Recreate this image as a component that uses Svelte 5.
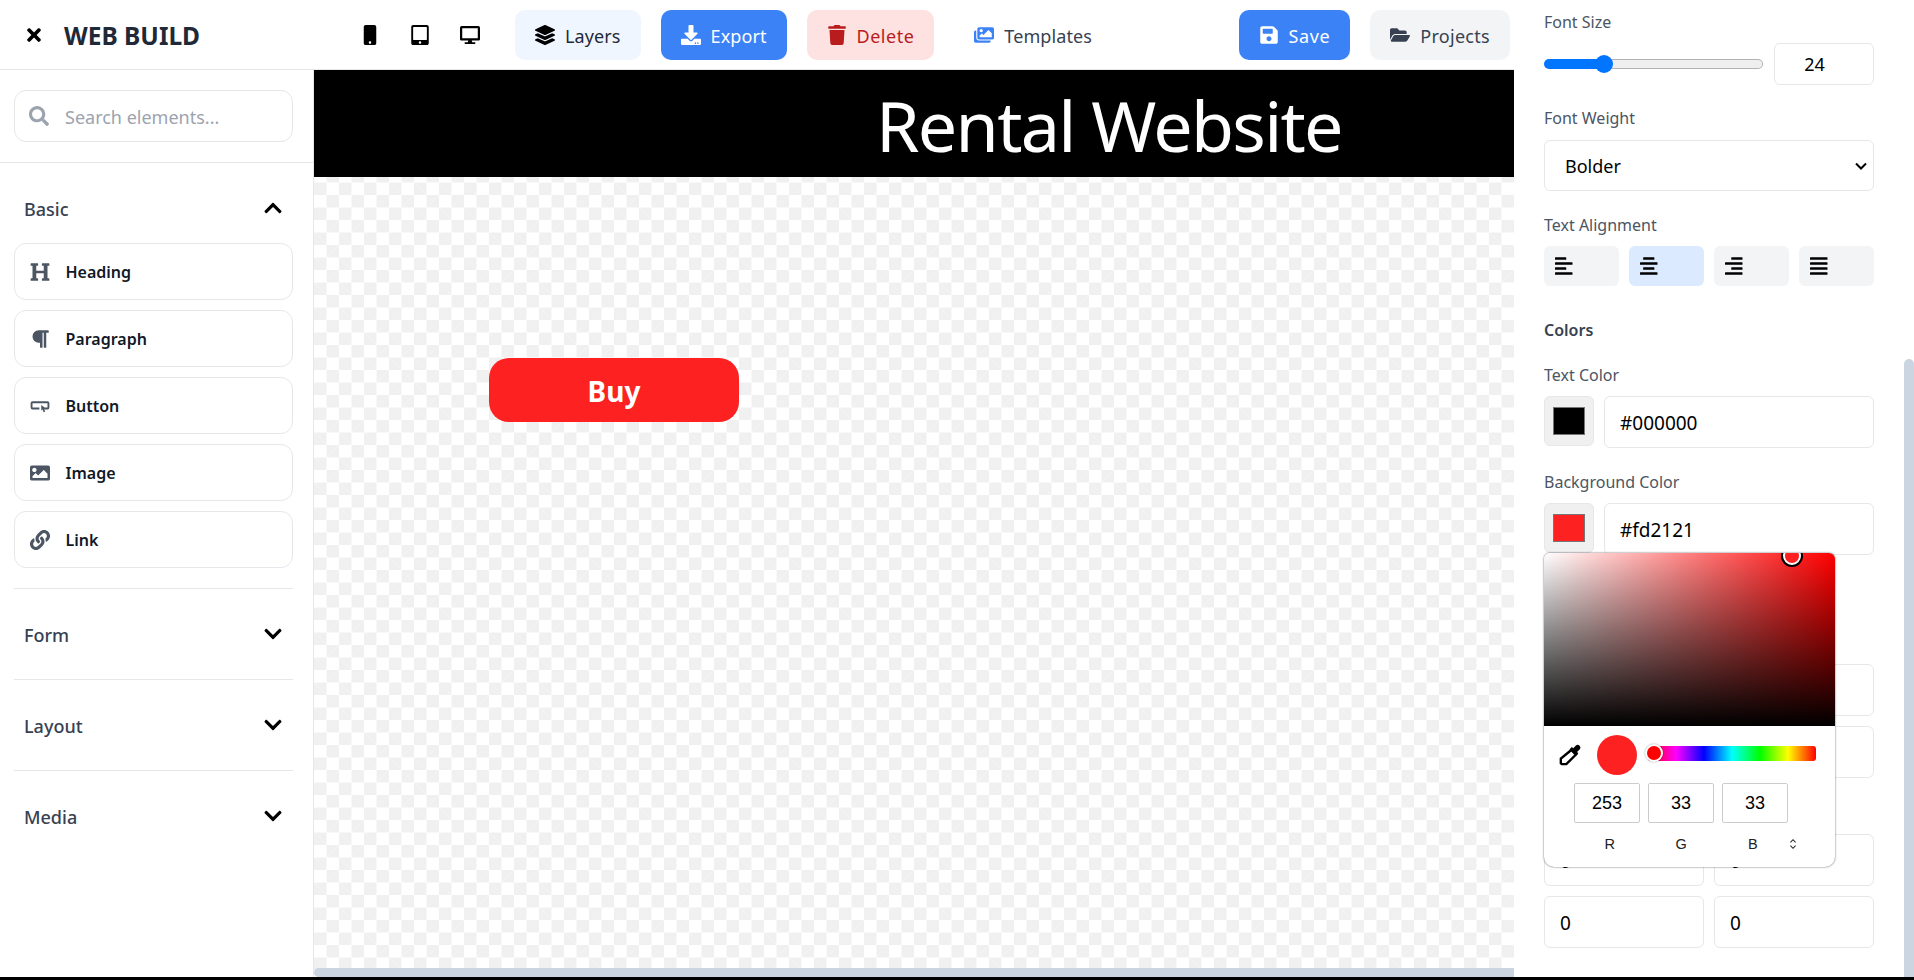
<script>
  const icons = {
    times: [352, 'M242.72 256l100.07-100.07c12.28-12.28 12.28-32.19 0-44.48l-22.24-22.24c-12.28-12.28-32.19-12.28-44.48 0L176 189.28 75.93 89.21c-12.28-12.28-32.19-12.28-44.48 0L9.21 111.45c-12.28 12.28-12.28 32.19 0 44.48L109.28 256 9.21 356.07c-12.28 12.28-12.28 32.19 0 44.48l22.24 22.24c12.28 12.28 32.2 12.28 44.48 0L176 322.72l100.07 100.07c12.28 12.28 32.2 12.28 44.48 0l22.24-22.24c12.28-12.28 12.28-32.19 0-44.48L242.72 256z'],
    mobile: [320, 'M272 0H48C21.5 0 0 21.5 0 48v416c0 26.5 21.5 48 48 48h224c26.5 0 48-21.5 48-48V48c0-26.5-21.5-48-48-48zM160 480c-17.7 0-32-14.3-32-32s14.3-32 32-32 32 14.3 32 32-14.3 32-32 32z'],
    tablet: [448, 'M400 0H48C21.5 0 0 21.5 0 48v416c0 26.5 21.5 48 48 48h352c26.5 0 48-21.5 48-48V48c0-26.5-21.5-48-48-48zM224 480c-17.7 0-32-14.3-32-32s14.3-32 32-32 32 14.3 32 32-14.3 32-32 32zm176-108c0 6.6-5.4 12-12 12H60c-6.6 0-12-5.4-12-12V60c0-6.6 5.4-12 12-12h328c6.6 0 12 5.4 12 12v312z'],
    desktop: [576, 'M528 0H48C21.5 0 0 21.5 0 48v320c0 26.5 21.5 48 48 48h192l-16 48h-72c-13.3 0-24 10.7-24 24s10.7 24 24 24h272c13.3 0 24-10.7 24-24s-10.7-24-24-24h-72l-16-48h192c26.5 0 48-21.5 48-48V48c0-26.5-21.5-48-48-48zm-16 352H64V64h448v288z'],
    layers: [512, 'M12.41 148.02l232.94 105.67c6.8 3.09 14.49 3.09 21.29 0l232.94-105.67c16.55-7.51 16.55-32.52 0-40.03L266.65 2.31a25.607 25.607 0 0 0-21.29 0L12.41 107.98c-16.55 7.51-16.55 32.53 0 40.04zm487.18 88.28l-58.09-26.33-161.64 73.27c-7.56 3.43-15.59 5.17-23.86 5.17s-16.29-1.74-23.86-5.17L70.51 209.97l-58.1 26.33c-16.55 7.5-16.55 32.5 0 40l232.94 105.59c6.8 3.08 14.49 3.08 21.29 0L499.59 276.3c16.55-7.5 16.55-32.5 0-40zm0 127.8l-57.87-26.23-161.86 73.37c-7.56 3.43-15.59 5.17-23.86 5.17s-16.29-1.74-23.86-5.17L70.29 337.87 12.41 364.1c-16.55 7.5-16.55 32.5 0 40l232.94 105.59c6.8 3.08 14.49 3.08 21.29 0L499.59 404.1c16.55-7.5 16.55-32.5 0-40z'],
    download: [512, 'M216 0h80c13.3 0 24 10.7 24 24v168h87.7c17.8 0 26.7 21.5 14.1 34.1L269.7 378.3c-7.5 7.5-19.8 7.5-27.3 0L90.1 226.1c-12.6-12.6-3.7-34.1 14.1-34.1H192V24c0-13.3 10.7-24 24-24zm296 376v112c0 13.3-10.7 24-24 24H24c-13.3 0-24-10.7-24-24V376c0-13.3 10.7-24 24-24h146.7l49 49c20.1 20.1 52.5 20.1 72.6 0l49-49H488c13.3 0 24 10.7 24 24zm-124 88c0-11-9-20-20-20s-20 9-20 20 9 20 20 20 20-9 20-20zm64 0c0-11-9-20-20-20s-20 9-20 20 9 20 20 20 20-9 20-20z'],
    trash: [448, 'M432 32H312l-9.4-18.7A24 24 0 0 0 281.1 0H166.8a23.72 23.72 0 0 0-21.4 13.3L136 32H16A16 16 0 0 0 0 48v32a16 16 0 0 0 16 16h416a16 16 0 0 0 16-16V48a16 16 0 0 0-16-16zM53.2 467a48 48 0 0 0 47.9 45h245.8a48 48 0 0 0 47.9-45L416 128H32z'],
    images: [576, 'M480 416v16c0 26.51-21.49 48-48 48H48c-26.51 0-48-21.49-48-48V176c0-26.51 21.49-48 48-48h16v208c0 44.112 35.888 80 80 80h336zm96-80V80c0-26.51-21.49-48-48-48H144c-26.51 0-48 21.49-48 48v256c0 26.51 21.49 48 48 48h384c26.51 0 48-21.49 48-48zM256 128c0 26.51-21.49 48-48 48s-48-21.49-48-48 21.49-48 48-48 48 21.49 48 48zm-96 144l55.515-55.515c4.686-4.686 12.284-4.686 16.971 0L272 256l135.515-135.515c4.686-4.686 12.284-4.686 16.971 0L512 208v112H160v-48z'],
    save: [448, 'M433.941 129.941l-83.882-83.882A48 48 0 0 0 316.118 32H48C21.49 32 0 53.49 0 80v352c0 26.51 21.49 48 48 48h352c26.51 0 48-21.49 48-48V163.882a48 48 0 0 0-14.059-33.941zM224 416c-35.346 0-64-28.654-64-64 0-35.346 28.654-64 64-64s64 28.654 64 64c0 35.346-28.654 64-64 64zm96-304.52V212c0 6.627-5.373 12-12 12H76c-6.627 0-12-5.373-12-12V108c0-6.627 5.373-12 12-12h228.52c3.183 0 6.235 1.264 8.485 3.515l3.48 3.48A11.996 11.996 0 0 1 320 111.48z'],
    folder: [576, 'M572.694 292.093L500.27 416.248A63.997 63.997 0 0 1 444.989 448H45.025c-18.523 0-30.064-20.093-20.731-36.093l72.424-124.155A64 64 0 0 1 152 256h399.964c18.523 0 30.064 20.093 20.73 36.093zM152 224h328v-48c0-26.51-21.49-48-48-48H272l-64-64H48C21.49 64 0 85.49 0 112v278.046l69.077-118.418C86.214 242.25 117.989 224 152 224z'],
    search: [512, 'M505 442.7L405.3 343c-4.5-4.5-10.6-7-17-7H372c27.6-35.3 44-79.7 44-128C416 93.1 322.9 0 208 0S0 93.1 0 208s93.1 208 208 208c48.3 0 92.7-16.4 128-44v16.3c0 6.4 2.5 12.5 7 17l99.7 99.7c9.4 9.4 24.6 9.4 33.9 0l28.3-28.3c9.4-9.4 9.4-24.6.1-34zM208 336c-70.7 0-128-57.2-128-128 0-70.7 57.2-128 128-128 70.7 0 128 57.2 128 128 0 70.7-57.2 128-128 128z'],
    heading: [512, 'M448 96v320h32a16 16 0 0 1 16 16v32a16 16 0 0 1-16 16H320a16 16 0 0 1-16-16v-32a16 16 0 0 1 16-16h32V288H160v128h32a16 16 0 0 1 16 16v32a16 16 0 0 1-16 16H32a16 16 0 0 1-16-16v-32a16 16 0 0 1 16-16h32V96H32a16 16 0 0 1-16-16V48a16 16 0 0 1 16-16h160a16 16 0 0 1 16 16v32a16 16 0 0 1-16 16h-32v128h192V96h-32a16 16 0 0 1-16-16V48a16 16 0 0 1 16-16h160a16 16 0 0 1 16 16v32a16 16 0 0 1-16 16z'],
    paragraph: [448, 'M448 48v32a16 16 0 0 1-16 16h-48v368a16 16 0 0 1-16 16h-32a16 16 0 0 1-16-16V96h-32v368a16 16 0 0 1-16 16h-32a16 16 0 0 1-16-16V352h-32a160 160 0 0 1 0-320h240a16 16 0 0 1 16 16z'],
    button: [512, 'M64 136h384a48 48 0 0 1 48 48v112a48 48 0 0 1-48 48h-84v-48h84V184H64v112h176v48H64a48 48 0 0 1-48-48V184a48 48 0 0 1 48-48zM288 232l128 92h-60l34 72-40 18-34-74-28 38z'],
    image: [512, 'M464 448H48c-26.51 0-48-21.49-48-48V112c0-26.51 21.49-48 48-48h416c26.51 0 48 21.49 48 48v288c0 26.51-21.49 48-48 48zM112 120c-30.928 0-56 25.072-56 56s25.072 56 56 56 56-25.072 56-56-25.072-56-56-56zM64 384h384V272l-87.515-87.515c-4.686-4.686-12.284-4.686-16.971 0L208 320l-55.515-55.515c-4.686-4.686-12.284-4.686-16.971 0L64 336v48z'],
    link: [512, 'M326.612 185.391c59.747 59.809 58.927 155.698.36 214.59-.11.12-.24.25-.36.37l-67.2 67.2c-59.27 59.27-155.699 59.262-214.96 0-59.27-59.26-59.27-155.7 0-214.96l37.106-37.106c9.84-9.84 26.786-3.3 27.294 10.606.648 17.722 3.826 35.527 9.69 52.721 1.986 5.822.567 12.262-3.783 16.612l-13.087 13.087c-28.026 28.026-28.905 73.66-1.155 101.96 28.024 28.579 74.086 28.749 102.325.51l67.2-67.19c28.191-28.191 28.073-73.757 0-101.83-3.701-3.694-7.429-6.564-10.341-8.569a16.037 16.037 0 0 1-6.947-12.606c-.396-10.567 3.348-21.456 11.698-29.806l21.054-21.055c5.521-5.521 14.182-6.199 20.584-1.731a152.482 152.482 0 0 1 20.522 17.197zM467.547 44.449c-59.261-59.262-155.69-59.27-214.96 0l-67.2 67.2c-.12.12-.25.25-.36.37-58.566 58.892-59.387 154.781.36 214.59a152.454 152.454 0 0 0 20.521 17.196c6.402 4.468 15.064 3.789 20.584-1.731l21.054-21.055c8.35-8.35 12.094-19.239 11.698-29.806a16.037 16.037 0 0 0-6.947-12.606c-2.912-2.005-6.64-4.875-10.341-8.569-28.073-28.073-28.191-73.639 0-101.83l67.2-67.19c28.239-28.239 74.3-28.069 102.325.51 27.75 28.3 26.872 73.934-1.155 101.96l-13.087 13.087c-4.35 4.35-5.769 10.79-3.783 16.612 5.864 17.194 9.042 34.999 9.69 52.721.509 13.906 17.454 20.446 27.294 10.606l37.106-37.106c59.271-59.259 59.271-155.699.001-214.959z'],
    down: [448, 'M207.029 381.476L12.686 187.132c-9.373-9.373-9.373-24.569 0-33.941l22.667-22.667c9.357-9.357 24.522-9.375 33.901-.04L224 284.505l154.745-154.021c9.379-9.335 24.544-9.317 33.901.04l22.667 22.667c9.373 9.373 9.373 24.569 0 33.941L240.971 381.476c-9.373 9.372-24.569 9.372-33.942 0z'],
    up: [448, 'M240.971 130.524l194.343 194.343c9.373 9.373 9.373 24.569 0 33.941l-22.667 22.667c-9.357 9.357-24.522 9.375-33.901.04L224 227.495 69.255 381.516c-9.379 9.335-24.544 9.317-33.901-.04l-22.667-22.667c-9.373-9.373-9.373-24.569 0-33.941L207.03 130.525c9.372-9.373 24.568-9.373 33.941-.001z']
  };

  const devices = ['mobile', 'tablet', 'desktop'];
  const elements = [
    { name: 'Heading', icon: 'heading' },
    { name: 'Paragraph', icon: 'paragraph' },
    { name: 'Button', icon: 'button' },
    { name: 'Image', icon: 'image' },
    { name: 'Link', icon: 'link' }
  ];
  const closedSections = ['Form', 'Layout', 'Media'];

  // bar offsets per alignment, in the 448 wide icon box
  const aligns = [
    { name: 'left', short: 0 },
    { name: 'center', short: 80, active: true },
    { name: 'right', short: 160 },
    { name: 'justify', short: 0, full: true }
  ];
  const rgb = [253, 33, 33];
</script>

{#snippet icon(name, size = 20)}
  <svg class="ico" viewBox="0 0 {icons[name][0]} 512" width={size} height={size}>
    <path fill="currentColor" d={icons[name][1]} />
  </svg>
{/snippet}

<div class="page">
  <div class="main">
    <header class="topbar">
      <div class="brand">
        <button class="plain close">{@render icon('times')}</button>
        <h1>WEB BUILD</h1>
      </div>
      <div class="devices">
        {#each devices as d}
          <button class="plain device">{@render icon(d)}</button>
        {/each}
      </div>
      <div class="actions">
        <button class="btn layers">{@render icon('layers')}<span>Layers</span></button>
        <button class="btn blue">{@render icon('download')}<span>Export</span></button>
        <button class="btn danger">{@render icon('trash')}<span>Delete</span></button>
        <button class="btn templates">{@render icon('images')}<span>Templates</span></button>
      </div>
      <div class="actions right">
        <button class="btn blue save">{@render icon('save')}<span>Save</span></button>
        <button class="btn projects">{@render icon('folder')}<span>Projects</span></button>
      </div>
    </header>

    <div class="workspace">
      <aside class="sidebar">
        <div class="searchwrap">
          <div class="search">
            {@render icon('search')}
            <input type="text" placeholder="Search elements..." />
          </div>
        </div>
        <div class="sections">
          <section class="open">
            <div class="sec-head"><span>Basic</span>{@render icon('up')}</div>
            <div class="cards">
              {#each elements as el}
                <div class="card">
                  <span class="card-icon">{@render icon(el.icon)}</span>
                  {el.name}
                </div>
              {/each}
            </div>
          </section>
          {#each closedSections as s}
            <section>
              <div class="sec-head"><span>{s}</span>{@render icon('down')}</div>
            </section>
          {/each}
        </div>
      </aside>

      <div class="canvas">
        <div class="hero">Rental Website</div>
        <button class="buy">Buy</button>
        <div class="hscroll"></div>
      </div>
    </div>
  </div>

  <aside class="props">
    <label class="lbl" for="fs">Font Size</label>
    <div class="size-row">
      <input id="fs" type="range" min="10" max="66" value="24" />
      <input class="field num" type="text" value="24" />
    </div>

    <label class="lbl" for="fw">Font Weight</label>
    <select id="fw" class="field weight">
      <option>Bolder</option>
    </select>

    <div class="lbl">Text Alignment</div>
    <div class="align-row">
      {#each aligns as a}
        <button class="align" class:active={a.active}>
          <svg viewBox="0 0 448 512" width="17.5" height="20">
            <rect x={a.short} y="32" width={a.full ? 448 : 288} height="64" rx="14" />
            <rect x="0" y="160" width="448" height="64" rx="14" />
            <rect x={a.short} y="288" width={a.full ? 448 : 288} height="64" rx="14" />
            <rect x="0" y="416" width="448" height="64" rx="14" />
          </svg>
        </button>
      {/each}
    </div>

    <h3>Colors</h3>

    <div class="lbl">Text Color</div>
    <div class="color-row">
      <input class="swatch" type="color" value="#000000" />
      <input class="field hex" type="text" value="#000000" />
    </div>

    <div class="lbl">Background Color</div>
    <div class="color-row popup-anchor">
      <input class="swatch" type="color" value="#fd2121" />
      <input class="field hex" type="text" value="#fd2121" />

      <div class="picker">
        <div class="sat">
          <span class="sat-dot"></span>
        </div>
        <div class="picker-top">
          <svg class="dropper" viewBox="0 0 24 24" width="22" height="22">
            <path d="M13.5 6.500l5 5L8 22H3l-1-1v-5z" fill="#fff" stroke="#000" stroke-width="2.6" stroke-linejoin="miter" />
            <path d="M11.500 5.800l2.600-2.600 1.400 1.400 3-3a3 3 0 0 1 4.200 4.200l-3 3 1.400 1.400-2.600 2.600z" fill="#000" />
          </svg>
          <span class="preview"></span>
          <div class="hue"><span class="hue-thumb"></span></div>
        </div>
        <div class="rgb-row">
          {#each rgb as v}
            <input class="rgb" type="text" value={v} />
          {/each}
        </div>
        <div class="rgb-labels">
          <span>R</span><span>G</span><span>B</span>
          <svg class="toggle" viewBox="0 0 8 14" width="8" height="12">
            <path d="M1 5l3-3 3 3M1 9l3 3 3-3" fill="none" stroke="#222" stroke-width="1.2" />
          </svg>
        </div>
      </div>
    </div>

    <div class="lbl-gap first"></div>
    <input class="field hex" type="text" value="" />
    <input class="field hex stacked" type="text" value="" />
    <div class="lbl-gap second"></div>
    <div class="pair-grid">
      <input class="field hex" type="text" value="0" />
      <input class="field hex" type="text" value="0" />
      <input class="field hex" type="text" value="0" />
      <input class="field hex" type="text" value="0" />
    </div>

    <div class="vscroll"></div>
  </aside>
</div>

<style>
  :global(body) {
    margin: 0;
    overflow: hidden;
    background: #fff;
    font-family: "Noto Sans", "Open Sans", sans-serif;
  }

  .page {
    display: flex;
    width: 1914px;
    height: 977px;
    border-bottom: 3px solid #000;
    overflow: hidden;
  }

  button {
    font-family: inherit;
    border: 0;
    cursor: pointer;
  }

  .ico {
    display: block;
    flex: none;
  }

  .main {
    width: 1514px;
    display: flex;
    flex-direction: column;
    flex: none;
  }

  .topbar {
    height: 69px;
    flex: none;
    display: flex;
    align-items: center;
    border-bottom: 1px solid #e5e7eb;
    background: #fff;
  }

  .brand {
    width: 345px;
    padding-left: 24px;
    box-sizing: border-box;
    display: flex;
    align-items: center;
    gap: 20px;
    flex: none;
  }

  .brand h1 {
    margin: 0;
    padding-top: 2px;
    font-size: 24.5px;
    font-weight: 700;
    color: #1f2937;
  }

  .plain {
    background: none;
    padding: 0;
    color: #000;
  }

  .close {
    display: flex;
  }

  .devices {
    display: flex;
    width: 170px;
    flex: none;
  }

  .device {
    width: 50px;
    display: flex;
    justify-content: center;
    padding: 0;
  }

  .actions {
    display: flex;
    gap: 20px;
  }

  .actions.right {
    margin-left: auto;
    margin-right: 4px;
  }

  .btn {
    height: 50px;
    padding: 0 20px;
    border-radius: 10px;
    display: flex;
    align-items: center;
    gap: 10px;
    font-size: 18px;
    letter-spacing: 0.1px;
    background: #f3f4f6;
    color: #374151;
  }

  .btn span {
    padding-top: 2px;
  }

  .layers {
    background: #eff6ff;
    color: #1f2937;
  }

  .layers .ico {
    color: #000;
  }

  .blue {
    background: #3b82f6;
    color: #fff;
  }

  .save {
    letter-spacing: 0.6px;
  }

  .projects {
    letter-spacing: 0.3px;
  }

  .danger {
    background: #fee2e2;
    color: #b91c1c;
    letter-spacing: 0.5px;
  }

  .templates {
    background: none;
  }

  .templates .ico {
    color: #3b82f6;
  }

  .workspace {
    flex: 1;
    display: flex;
    min-height: 0;
  }

  .sidebar {
    width: 314px;
    flex: none;
    box-sizing: border-box;
    border-right: 1px solid #e5e7eb;
    background: #fff;
  }

  .searchwrap {
    padding: 20px 20px 20px 14px;
    border-bottom: 1px solid #e5e7eb;
  }

  .search {
    height: 52px;
    box-sizing: border-box;
    border: 1.5px solid #e5e7eb;
    border-radius: 12px;
    display: flex;
    align-items: center;
    gap: 16px;
    padding-left: 14px;
    color: #9ca3af;
  }

  .search input {
    border: 0;
    outline: 0;
    flex: 1;
    min-width: 0;
    padding: 2px 0 0;
    font-family: inherit;
    font-size: 18px;
    background: none;
  }

  .search input::placeholder {
    color: #9ca3af;
  }

  .sections {
    padding: 0 20px 0 14px;
  }

  section {
    padding: 30px 0 28px;
    border-bottom: 1px solid #e5e7eb;
  }

  section.open {
    padding-bottom: 20px;
  }

  section:last-child {
    border-bottom: 0;
  }

  .sec-head {
    height: 32px;
    display: flex;
    align-items: center;
    justify-content: space-between;
    padding: 0 10px;
    font-size: 18px;
    font-weight: 500;
    color: #374151;
  }

  .sec-head .ico {
    color: #000;
    margin-top: -2px;
  }

  .cards {
    margin-top: 18px;
    display: flex;
    flex-direction: column;
    gap: 10px;
  }

  .card {
    height: 57px;
    box-sizing: border-box;
    border: 1.5px solid #e5e7eb;
    border-radius: 12px;
    display: flex;
    align-items: center;
    gap: 16px;
    padding-left: 14.5px;
    font-size: 16px;
    font-weight: 600;
    color: #111827;
  }

  .card-icon {
    width: 20px;
    display: flex;
    justify-content: center;
    color: #4b5563;
  }

  .canvas {
    flex: 1;
    min-width: 0;
    position: relative;
    overflow: hidden;
    background-color: #fff;
    background-image:
      linear-gradient(45deg, #f0f0f0 25%, transparent 25%),
      linear-gradient(-45deg, #f0f0f0 25%, transparent 25%),
      linear-gradient(45deg, transparent 75%, #f0f0f0 75%),
      linear-gradient(-45deg, transparent 75%, #f0f0f0 75%);
    background-size: 25px 25px;
    background-position: 0 0, 0 12.5px, 12.5px -12.5px, -12.5px 0;
  }

  .hero {
    height: 107px;
    box-sizing: border-box;
    padding: 3px 0 0 562px;
    background: #000;
    color: #fff;
    font-size: 70px;
    font-weight: 400;
    letter-spacing: -1.7px;
    line-height: 104px;
  }

  .buy {
    position: absolute;
    left: 175px;
    top: 288px;
    width: 250px;
    height: 64px;
    padding: 2px 0 0;
    border-radius: 20px;
    background: #fd2121;
    color: #fff;
    font-size: 28px;
    font-weight: 700;
  }

  .hscroll {
    position: absolute;
    left: 0;
    right: 0;
    bottom: 0;
    height: 9px;
    background: #cbd5e1;
    border-radius: 5px 0 0 5px;
  }

  .props {
    position: relative;
    width: 400px;
    flex: none;
    box-sizing: border-box;
    padding: 11px 40px 0 30px;
    background: #fff;
    overflow: hidden;
  }

  .lbl {
    display: block;
    font-size: 16px;
    line-height: 22px;
    color: #4b5563;
  }

  .size-row {
    display: flex;
    align-items: center;
    gap: 11px;
    margin: 10px 0 22px;
  }

  .size-row input[type="range"] {
    appearance: none;
    -webkit-appearance: none;
    width: 219px;
    height: 10px;
    margin: 0;
    flex: none;
    box-sizing: border-box;
    border: 1px solid transparent;
    border-radius: 5px;
    background:
      linear-gradient(#0075ff, #0075ff) left / 60px 100% no-repeat border-box,
      linear-gradient(#efefef, #efefef) padding-box,
      #b2b2b2 border-box;
  }

  .size-row input[type="range"]::-webkit-slider-thumb {
    -webkit-appearance: none;
    width: 18px;
    height: 18px;
    border-radius: 50%;
    background: #0075ff;
  }

  .field {
    display: block;
    width: 100%;
    box-sizing: border-box;
    height: 52px;
    border: 1px solid #e5e7eb;
    border-radius: 6px;
    background: #fff;
    font-family: inherit;
    font-size: 18px;
    color: #000;
    padding: 0 15px;
    outline: 0;
  }

  .hex {
    font-size: 19px;
    padding-top: 2px;
  }

  .num {
    width: 100px;
    height: 42px;
    flex: none;
    text-align: center;
    padding: 0 19px 0 0;
  }

  .weight {
    appearance: none;
    -webkit-appearance: none;
    height: 51px;
    margin: 11px 0 23px;
    padding-left: 20px;
    background: #fff url("data:image/svg+xml,%3Csvg xmlns='http://www.w3.org/2000/svg' width='12' height='8'%3E%3Cpath d='M1 1.5l5 5 5-5' fill='none' stroke='%23000' stroke-width='2'/%3E%3C/svg%3E") no-repeat right 6px center;
  }

  .align-row {
    display: flex;
    gap: 10px;
    margin: 10px 0 34px;
  }

  .align {
    width: 75px;
    height: 40px;
    padding: 0 0 0 11px;
    border-radius: 6px;
    background: #f3f4f6;
    display: flex;
    align-items: center;
    fill: #000;
  }

  .align.active {
    background: #dbeafe;
  }

  h3 {
    margin: 0 0 24px;
    font-size: 16px;
    line-height: 20px;
    font-weight: 600;
    color: #374151;
  }

  .color-row {
    display: flex;
    gap: 10px;
    margin: 10px 0 23px;
  }

  .swatch {
    width: 50px;
    height: 50px;
    flex: none;
    box-sizing: border-box;
    border: 1px solid #e5e7eb;
    border-radius: 6px;
    background: #f0f0f0;
    padding: 6px 6px;
  }

  .popup-anchor {
    position: relative;
  }

  .picker {
    position: absolute;
    left: 0;
    top: 50px;
    z-index: 5;
    width: 291px;
    height: 314px;
    background: #fff;
    border-radius: 6px 6px 10px 10px;
    box-shadow: 0 0 2px rgba(0, 0, 0, 0.7);
    overflow: hidden;
    font-family: "Liberation Sans", Arial, sans-serif;
  }

  .sat {
    height: 173px;
    position: relative;
    overflow: hidden;
    background-image: linear-gradient(to top, #000, transparent), linear-gradient(to right, #fff, #f00);
  }

  .sat-dot {
    position: absolute;
    left: 239px;
    top: -6px;
    width: 14px;
    height: 14px;
    border-radius: 50%;
    background: #fd2121;
    border: 2px solid #fff;
    box-shadow: 0 0 0 2px #000;
  }

  .picker-top {
    position: relative;
    height: 57px;
    display: flex;
    align-items: center;
  }

  .dropper {
    margin-left: 15px;
    flex: none;
  }

  .preview {
    width: 40px;
    height: 40px;
    margin-left: 16px;
    border-radius: 50%;
    background: #fd2121;
    flex: none;
  }

  .hue {
    position: relative;
    margin-left: 11px;
    width: 168px;
    height: 15px;
    margin-top: -3px;
    border-radius: 3px;
    background: linear-gradient(to right, #f00, #f0f, #00f, #0ff, #0f0, #ff0, #f00);
  }

  .hue-thumb {
    position: absolute;
    left: -3px;
    top: -1.5px;
    width: 14px;
    height: 14px;
    border-radius: 50%;
    background: #f00;
    border: 2px solid #fff;
    box-shadow: 0 0 2px rgba(0, 0, 0, 0.4);
  }

  .rgb-row {
    display: flex;
    gap: 8px;
    padding-left: 30px;
  }

  .rgb {
    width: 66px;
    height: 40px;
    box-sizing: border-box;
    border: 1px solid #ccc;
    border-radius: 2px;
    text-align: center;
    font-family: inherit;
    font-size: 18px;
    padding: 0;
    color: #000;
    outline: 0;
  }

  .rgb-labels {
    position: relative;
    display: grid;
    grid-template-columns: repeat(3, 71.5px);
    padding-left: 30px;
    margin-top: 12px;
    font-size: 14.5px;
    line-height: 18px;
    color: #222;
    text-align: center;
  }

  .toggle {
    position: absolute;
    left: 245px;
    top: 3px;
  }

  .lbl-gap.first {
    height: 86px;
  }

  .lbl-gap.second {
    height: 56px;
  }

  .stacked {
    margin-top: 10px;
  }

  .pair-grid {
    display: grid;
    grid-template-columns: 1fr 1fr;
    gap: 10px;
  }

  .vscroll {
    position: absolute;
    right: 0;
    top: 359px;
    bottom: 0;
    width: 10px;
    background: #cbd5e1;
    border-radius: 5px 5px 0 0;
  }
</style>
